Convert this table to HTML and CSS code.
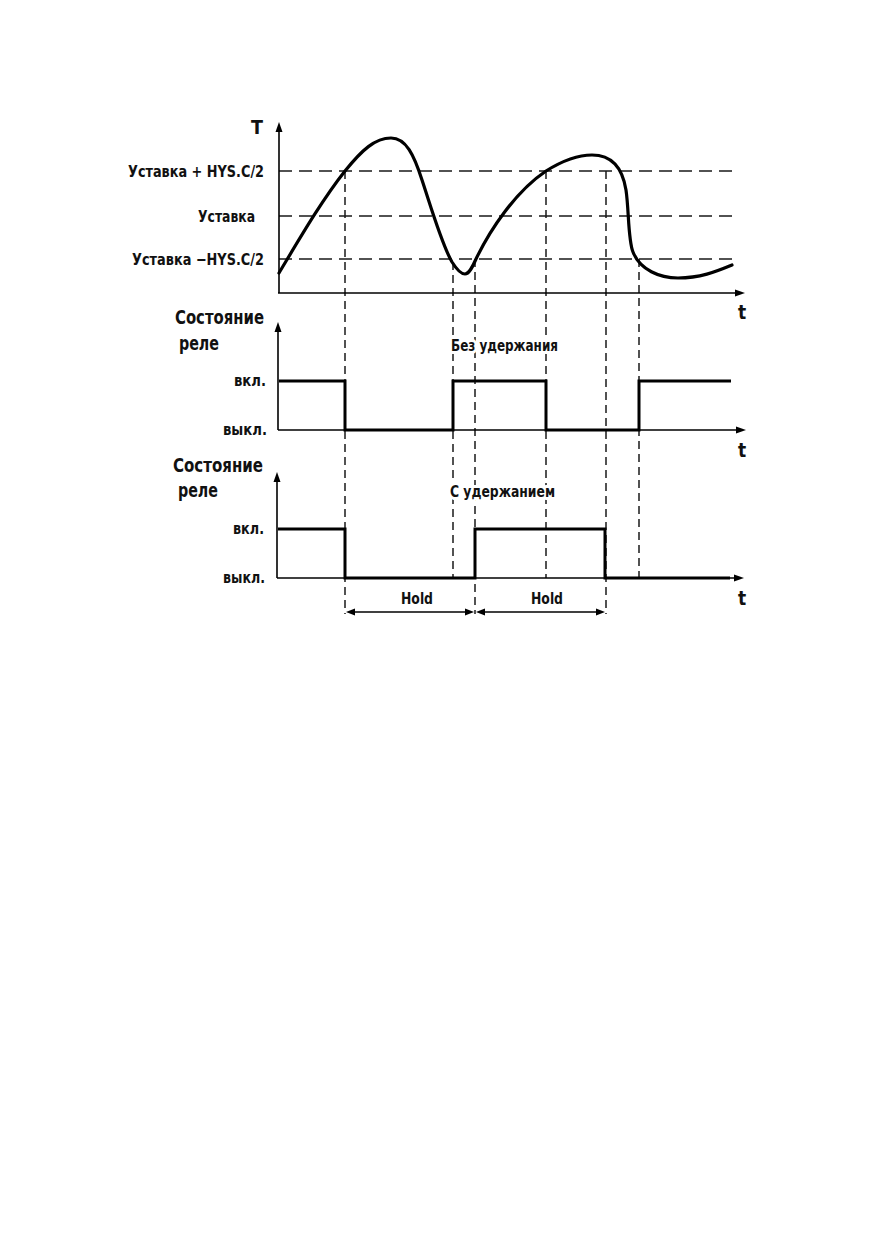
FILE: index.html
```html
<!DOCTYPE html>
<html lang="ru">
<head>
<meta charset="utf-8">
<title>Диаграмма работы реле</title>
<link rel="stylesheet" href="styles.css">
</head>
<body>
<svg class="chart" width="872" height="1239" viewBox="0 0 872 1239" xmlns="http://www.w3.org/2000/svg">
  <!-- Temperature graph -->
  <g class="dash-h">
    <line x1="279" y1="171" x2="735" y2="171"/>
    <line x1="279" y1="216" x2="735" y2="216"/>
    <line x1="279" y1="259" x2="735" y2="259"/>
  </g>
  <g class="dash-v">
    <line x1="345" y1="171" x2="345" y2="614"/>
    <line x1="453" y1="262" x2="453" y2="578"/>
    <line x1="475" y1="259" x2="475" y2="614"/>
    <line x1="546" y1="171" x2="546" y2="578"/>
    <line x1="606" y1="171" x2="606" y2="614"/>
    <line x1="639" y1="259" x2="639" y2="578"/>
  </g>
  <g class="axis">
    <line x1="279" y1="293" x2="279" y2="130"/>
    <line x1="278" y1="293" x2="737" y2="293"/>
    <line x1="278" y1="430" x2="278" y2="330"/>
    <line x1="278" y1="430" x2="738" y2="430"/>
    <line x1="277" y1="578" x2="277" y2="480"/>
    <line x1="277" y1="578" x2="736" y2="578"/>
    <line x1="352" y1="612" x2="468" y2="612"/>
    <line x1="482" y1="612" x2="598" y2="612"/>
  </g>
  <g class="head">
    <polygon points="279,122 275.5,132 282.5,132"/>
    <polygon points="745,293 735,289.5 735,296.5"/>
    <polygon points="278,322 274.5,332 281.5,332"/>
    <polygon points="746,430 736,426.5 736,433.5"/>
    <polygon points="277,472 273.5,482 280.5,482"/>
    <polygon points="744,578 734,574.5 734,581.5"/>
    <polygon points="346,612 355,608.5 355,615.5"/>
    <polygon points="474,612 465,608.5 465,615.5"/>
    <polygon points="476,612 485,608.5 485,615.5"/>
    <polygon points="605,612 596,608.5 596,615.5"/>
  </g>
  <path class="curve" d="M279,273 C300,238 322,200 345,171 C362,150 375,138 391,138 C406,138 414,155 422,180 C431,207 442,245 452,262 C457,270 461,274 465,274 C469,274 472,268 476,259 C490,230 515,192 546,171 C562,161 577,155 592,155 C610,155 622,165 626,190 C629,210 628,240 633,252 C640,270 660,278 678,278 C700,278 715,272 732,265"/>

  <!-- Relay without hold -->
  <path class="sig" d="M279,381 H345 V430 H453 V381 H546 V430 H639 V381 H731"/>
  <!-- Relay with hold -->
  <path class="sig" d="M278,529 H345 V578 H475 V529 H605 V578 H730"/>

  <!-- Labels -->
  <text class="t-axis" x="257" y="134" text-anchor="middle" textLength="12" lengthAdjust="spacingAndGlyphs">T</text>
  <text class="t-lbl" x="128" y="177" textLength="136" lengthAdjust="spacingAndGlyphs">Уставка + HYS.C/2</text>
  <text class="t-lbl" x="198" y="222" textLength="57" lengthAdjust="spacingAndGlyphs">Уставка</text>
  <text class="t-lbl" x="132" y="265" textLength="132" lengthAdjust="spacingAndGlyphs">Уставка −HYS.C/2</text>
  <text class="t-axis" x="742" y="319" text-anchor="middle">t</text>

  <text class="t-big" x="175" y="324" textLength="89" lengthAdjust="spacingAndGlyphs">Состояние</text>
  <text class="t-big" x="179" y="350" textLength="40" lengthAdjust="spacingAndGlyphs">реле</text>
  <text class="t-sm" x="234" y="386" textLength="32" lengthAdjust="spacingAndGlyphs">вкл.</text>
  <text class="t-sm" x="223" y="435" textLength="44" lengthAdjust="spacingAndGlyphs">выкл.</text>
  <text class="t-lbl t-halo" x="451" y="351" textLength="107" lengthAdjust="spacingAndGlyphs">Без удержания</text>
  <text class="t-axis" x="742" y="457" text-anchor="middle">t</text>

  <text class="t-big" x="173" y="472" textLength="90" lengthAdjust="spacingAndGlyphs">Состояние</text>
  <text class="t-big" x="178" y="497" textLength="40" lengthAdjust="spacingAndGlyphs">реле</text>
  <text class="t-sm" x="233" y="534" textLength="31" lengthAdjust="spacingAndGlyphs">вкл.</text>
  <text class="t-sm" x="223" y="583" textLength="42" lengthAdjust="spacingAndGlyphs">выкл.</text>
  <text class="t-lbl t-halo" x="450" y="497" textLength="105" lengthAdjust="spacingAndGlyphs">С удержанием</text>
  <text class="t-axis" x="742" y="605" text-anchor="middle">t</text>

  <text class="t-sm" x="401" y="604" textLength="32" lengthAdjust="spacingAndGlyphs">Hold</text>
  <text class="t-sm" x="531" y="604" textLength="32" lengthAdjust="spacingAndGlyphs">Hold</text>
</svg>
</body>
</html>
```

FILE: styles.css
```css
html, body {
  margin: 0;
  padding: 0;
  background: #ffffff;
}

.chart {
  display: block;
}

.dash-h line {
  stroke: #1a1a1a;
  stroke-width: 1.6;
  stroke-dasharray: 13 7;
  fill: none;
}

.dash-v line {
  stroke: #1a1a1a;
  stroke-width: 1.5;
  stroke-dasharray: 8 5;
  fill: none;
}

.axis line {
  stroke: #000;
  stroke-width: 1.6;
  fill: none;
}

.head polygon {
  fill: #000;
  stroke: none;
}

.curve {
  fill: none;
  stroke: #000;
  stroke-width: 3.2;
  stroke-linecap: round;
  stroke-linejoin: round;
}

.sig {
  fill: none;
  stroke: #000;
  stroke-width: 3;
  stroke-linejoin: miter;
}

.t-lbl,
.t-sm,
.t-big,
.t-axis {
  font-family: "Liberation Sans Narrow", "DejaVu Sans Condensed", "Liberation Sans", sans-serif;
  font-weight: bold;
  fill: #111;
}

.t-halo {
  stroke: #ffffff;
  stroke-width: 6px;
  stroke-linejoin: round;
  paint-order: stroke;
}

.t-lbl {
  font-size: 16px;
}

.t-sm {
  font-size: 15px;
}

.t-big {
  font-size: 19px;
}

.t-axis {
  font-size: 19px;
}
```
